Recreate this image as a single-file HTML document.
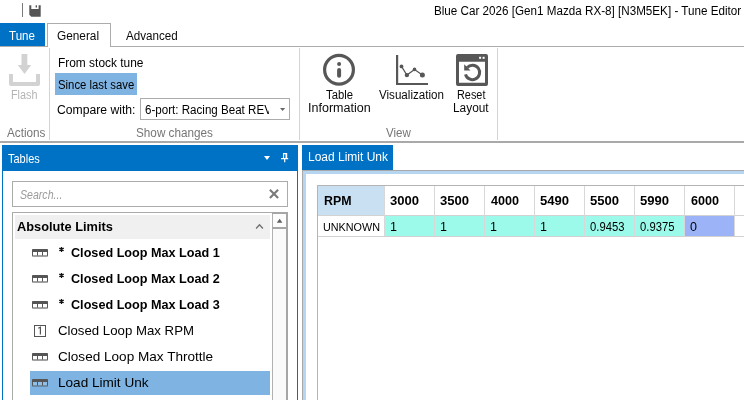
<!DOCTYPE html>
<html><head><meta charset="utf-8"><style>
html,body{margin:0;padding:0;width:744px;height:400px;overflow:hidden;background:#fff;position:relative}
body{font-family:"Liberation Sans",sans-serif}
.t{position:absolute;white-space:pre;line-height:20px;transform-origin:0 0}
.r{position:absolute}
svg{position:absolute}
</style></head><body>
<!-- title bar -->
<div class="r" style="left:22px;top:3px;width:1px;height:14px;background:#7a7a7a"></div>
<svg style="left:29px;top:5px" width="12" height="12" viewBox="0 0 12 12">
<path d="M0.3 0.3H2.3V4.1H9.6V0.3H11.7V11.7H2.3L0.3 9.7Z" fill="#555"/>
<rect x="6.6" y="0.3" width="1.4" height="2.2" fill="#555"/>
</svg>
<!-- tabs -->
<div class="r" style="left:0;top:46px;width:744px;height:1px;background:#acacac"></div>
<div class="r" style="left:0;top:23px;width:45px;height:23px;background:#0072c6"></div>
<div class="r" style="left:47px;top:23px;width:62px;height:23px;border:1px solid #acacac;border-bottom:none;background:#fff"></div>
<!-- ribbon dividers -->
<div class="r" style="left:49px;top:48px;width:1px;height:92px;background:#d4d4d4"></div>
<div class="r" style="left:299px;top:48px;width:1px;height:92px;background:#d4d4d4"></div>
<div class="r" style="left:497px;top:48px;width:1px;height:92px;background:#d4d4d4"></div>
<div class="r" style="left:0;top:141px;width:744px;height:2px;background:#a9a9a9"></div>
<!-- flash icon -->
<svg style="left:0;top:46px" width="50" height="50" viewBox="0 46 50 50">
<rect x="21.5" y="54" width="5.8" height="11.5" fill="#d2d2d2"/>
<path d="M17.8 65H31.2L24.5 74Z" fill="#d2d2d2"/>
<path d="M9 74H13V82H36V74H40V84A2 2 0 0 1 38 86H11A2 2 0 0 1 9 84Z" fill="#d2d2d2"/>
</svg>
<!-- since last save highlight -->
<div class="r" style="left:55px;top:73px;width:82px;height:22px;background:#7fb4e2"></div>
<!-- combobox -->
<div class="r" style="left:140px;top:98px;width:148px;height:20px;border:1px solid #acacac;background:#fff"></div>
<svg style="left:278px;top:105px" width="10" height="8" viewBox="0 0 10 8"><path d="M2 3H7.2L4.6 5.9Z" fill="#666"/></svg>
<!-- info icon -->
<svg style="left:320px;top:52px" width="40" height="40" viewBox="320 52 40 40">
<circle cx="339" cy="69.8" r="14.4" fill="none" stroke="#575757" stroke-width="3.2"/>
<circle cx="339.1" cy="63.9" r="2" fill="#575757"/>
<line x1="339.1" y1="70" x2="339.1" y2="75.8" stroke="#575757" stroke-width="4" stroke-linecap="round"/>
</svg>
<!-- visualization icon -->
<svg style="left:390px;top:50px" width="42" height="40" viewBox="390 50 42 40">
<rect x="396" y="55" width="2.2" height="30" fill="#575757"/>
<rect x="396" y="83" width="32" height="2" fill="#575757"/>
<polyline points="401.5,66.4 406.9,75.1 414.5,69.4 422.4,75" fill="none" stroke="#575757" stroke-width="1.2"/>
<circle cx="401.5" cy="66.4" r="1.9" fill="#575757"/>
<circle cx="406.9" cy="75.1" r="2.2" fill="#575757"/>
<circle cx="414.5" cy="69.4" r="1.8" fill="#575757"/>
<circle cx="422.4" cy="75" r="2.5" fill="#575757"/>
</svg>
<!-- reset layout icon -->
<svg style="left:450px;top:50px" width="42" height="40" viewBox="450 50 42 40">
<path fill-rule="evenodd" fill="#575757" d="M458 54H486A2 2 0 0 1 488 56V84A2 2 0 0 1 486 86H458A2 2 0 0 1 456 84V56A2 2 0 0 1 458 54ZM459 61.8V82.7H485V61.8Z"/>
<rect x="479.1" y="56.8" width="2" height="2" fill="#fff"/>
<rect x="482.6" y="56.8" width="2" height="2" fill="#fff"/>
<path d="M465.5 74.3A7.2 7.2 0 1 0 467.2 67.5" fill="none" stroke="#575757" stroke-width="3"/>
<path d="M464.2 64.2L464.2 70.5L470.5 70.5Z" fill="#575757"/>
</svg>
<!-- Tables panel -->
<div class="r" style="left:2px;top:145px;width:296px;height:26px;background:#0072c6"></div>
<div class="r" style="left:2px;top:171px;width:1px;height:229px;background:#0072c6"></div>
<div class="r" style="left:297px;top:171px;width:1px;height:229px;background:#0072c6"></div>
<svg style="left:258px;top:148px" width="36" height="20" viewBox="258 148 36 20">
<path d="M264 156H270L267 160Z" fill="#fff"/>
<path fill="#fff" d="M283 153H287.2V158H288.2V159.2H285.3V162.2H284.1V159.2H281V158H283ZM284.1 154.2V158H285.5V154.2Z"/>
</svg>
<!-- search box -->
<div class="r" style="left:12px;top:181px;width:274px;height:24px;border:1px solid #ababab;background:#fff"></div>
<svg style="left:262px;top:182px" width="24" height="24" viewBox="262 182 24 24">
<path d="M269.9 189.8L278.1 198M278.1 189.8L269.9 198" stroke="#7a7a7a" stroke-width="2.1"/>
</svg>
<!-- tree -->
<div class="r" style="left:12px;top:212px;width:276px;height:188px;border-left:1px solid #ababab;border-top:1px solid #ababab;box-sizing:border-box"></div>
<div class="r" style="left:15px;top:215px;width:255px;height:24px;background:#f0f0f0"></div>
<svg style="left:250px;top:220px" width="18" height="14" viewBox="250 220 18 14"><path d="M256.1 228.5L259.5 224.8L262.9 228.5" fill="none" stroke="#707070" stroke-width="1.35"/></svg>
<!-- scrollbar -->
<div class="r" style="left:272px;top:212px;width:16px;height:188px;background:#fafafa"></div>
<div class="r" style="left:272px;top:212px;width:1px;height:188px;background:#b0b0b0"></div>
<div class="r" style="left:286px;top:212px;width:2px;height:188px;background:#a6a6a6"></div>
<div class="r" style="left:272px;top:212px;width:16px;height:2px;background:#a6a6a6"></div>
<div class="r" style="left:273px;top:214px;width:13px;height:13px;background:#fdfdfd"></div>
<div class="r" style="left:272px;top:227px;width:16px;height:2px;background:#a6a6a6"></div>
<svg style="left:272px;top:214px" width="16" height="13" viewBox="272 214 16 13"><path d="M276.8 222.7H282.4L279.6 218.8Z" fill="#606060"/></svg>
<!-- selection -->
<div class="r" style="left:30px;top:371px;width:240px;height:24px;background:#7fb4e2"></div>
<!-- tree icons -->
<svg style="left:30px;top:240px" width="20" height="160" viewBox="30 240 20 160">
<g transform="translate(0 249)"><rect x="32" y="0" width="16" height="7.5" rx="0.8" fill="#555"/><rect x="33" y="3" width="4" height="3.5" fill="#fff"/><rect x="38" y="3" width="4" height="3.5" fill="#fff"/><rect x="43" y="3" width="4" height="3.5" fill="#fff"/><rect x="32.6" y="6.5" width="14.8" height="1" fill="#9a9a9a"/></g>
<g transform="translate(0 275)"><rect x="32" y="0" width="16" height="7.5" rx="0.8" fill="#555"/><rect x="33" y="3" width="4" height="3.5" fill="#fff"/><rect x="38" y="3" width="4" height="3.5" fill="#fff"/><rect x="43" y="3" width="4" height="3.5" fill="#fff"/><rect x="32.6" y="6.5" width="14.8" height="1" fill="#9a9a9a"/></g>
<g transform="translate(0 301)"><rect x="32" y="0" width="16" height="7.5" rx="0.8" fill="#555"/><rect x="33" y="3" width="4" height="3.5" fill="#fff"/><rect x="38" y="3" width="4" height="3.5" fill="#fff"/><rect x="43" y="3" width="4" height="3.5" fill="#fff"/><rect x="32.6" y="6.5" width="14.8" height="1" fill="#9a9a9a"/></g>
<rect x="34.5" y="325.5" width="11" height="11" fill="none" stroke="#555" stroke-width="1"/>
<path d="M38.3 328.3L40.4 327.2V334.6" fill="none" stroke="#555" stroke-width="1.2"/>
<g transform="translate(0 353)"><rect x="32" y="0" width="16" height="7.5" rx="0.8" fill="#555"/><rect x="33" y="3" width="4" height="3.5" fill="#fff"/><rect x="38" y="3" width="4" height="3.5" fill="#fff"/><rect x="43" y="3" width="4" height="3.5" fill="#fff"/><rect x="32.6" y="6.5" width="14.8" height="1" fill="#9a9a9a"/></g>
<g transform="translate(0 379)"><rect x="32" y="0" width="16" height="7.5" rx="0.8" fill="#555"/><rect x="33" y="3" width="4" height="3.5" fill="#8dbfe8"/><rect x="38" y="3" width="4" height="3.5" fill="#8dbfe8"/><rect x="43" y="3" width="4" height="3.5" fill="#8dbfe8"/><rect x="32.6" y="6.5" width="14.8" height="1" fill="#6f8fab"/></g>
</svg>
<!-- document tab -->
<div class="r" style="left:302px;top:145px;width:91px;height:25px;background:#0072c6"></div>
<div class="r" style="left:302px;top:170px;width:442px;height:1px;background:#a9a9a9"></div>
<div class="r" style="left:302px;top:170px;width:1px;height:230px;background:#a9a9a9"></div>
<div class="r" style="left:303px;top:171px;width:441px;height:3px;background:#b6d5f0"></div>
<div class="r" style="left:303px;top:171px;width:3px;height:229px;background:#b6d5f0"></div>
<!-- table -->
<div class="r" style="left:317px;top:185px;width:427px;height:1px;background:#b4b4b4"></div>
<div class="r" style="left:317px;top:185px;width:1px;height:215px;background:#b4b4b4"></div>
<div class="r" style="left:318px;top:186px;width:66px;height:29px;background:#c9dff2"></div>
<div class="r" style="left:385px;top:216px;width:349px;height:20px;background:#9cfaea"></div>
<div class="r" style="left:685px;top:216px;width:49px;height:20px;background:#9db3f8"></div>
<div class="r" style="left:318px;top:215px;width:426px;height:1px;background:#d2d2d2"></div>
<div class="r" style="left:318px;top:236px;width:426px;height:1px;background:#d2d2d2"></div>
<div class="r" style="left:384px;top:186px;width:1px;height:50px;background:#d8d8d8"></div>
<div class="r" style="left:434px;top:186px;width:1px;height:50px;background:#d8d8d8"></div>
<div class="r" style="left:484px;top:186px;width:1px;height:50px;background:#d8d8d8"></div>
<div class="r" style="left:534px;top:186px;width:1px;height:50px;background:#d8d8d8"></div>
<div class="r" style="left:584px;top:186px;width:1px;height:50px;background:#d8d8d8"></div>
<div class="r" style="left:634px;top:186px;width:1px;height:50px;background:#d8d8d8"></div>
<div class="r" style="left:684px;top:186px;width:1px;height:50px;background:#d8d8d8"></div>
<div class="r" style="left:734px;top:186px;width:1px;height:50px;background:#d8d8d8"></div>
<!-- asterisks -->
<svg style="left:56px;top:244px" width="10" height="70" viewBox="56 244 10 70">
<path transform="translate(61.5 249.4)" d="M0 -2.5V2.5M-2.2 -1.25L2.2 1.25M-2.2 1.25L2.2 -1.25" stroke="#111" stroke-width="1.3"/>
<path transform="translate(61.5 275.4)" d="M0 -2.5V2.5M-2.2 -1.25L2.2 1.25M-2.2 1.25L2.2 -1.25" stroke="#111" stroke-width="1.3"/>
<path transform="translate(61.5 301.4)" d="M0 -2.5V2.5M-2.2 -1.25L2.2 1.25M-2.2 1.25L2.2 -1.25" stroke="#111" stroke-width="1.3"/>
</svg>

<div style="position:absolute;left:0;top:0;width:744px;height:400px;will-change:transform">
<span class="t" style="left:434.03px;top:0.50px;font-size:12px;color:#000;transform:scaleX(0.9714)">Blue Car 2026 [Gen1 Mazda RX-8] [N3M5EK] - Tune Editor</span>
<span class="t" style="left:9.00px;top:25.80px;font-size:12px;color:#fff;transform:scaleX(0.9630)">Tune</span>
<span class="t" style="left:57.11px;top:25.60px;font-size:12px;color:#0a0a0a;transform:scaleX(0.9854)">General</span>
<span class="t" style="left:125.70px;top:25.60px;font-size:12px;color:#0a0a0a;transform:scaleX(0.9698)">Advanced</span>
<span class="t" style="left:11.40px;top:84.80px;font-size:12px;color:#b4b4b4;transform:scaleX(0.9000)">Flash</span>
<span class="t" style="left:6.50px;top:122.50px;font-size:12px;color:#767676;transform:scaleX(0.9769)">Actions</span>
<span class="t" style="left:57.71px;top:52.80px;font-size:12px;color:#000;transform:scaleX(0.9929)">From stock tune</span>
<span class="t" style="left:57.76px;top:74.60px;font-size:12px;color:#000;transform:scaleX(0.9443)">Since last save</span>
<span class="t" style="left:57.29px;top:99.50px;font-size:12px;color:#000;transform:scaleX(1.0147)">Compare with:</span>
<div style="position:absolute;left:140px;top:90px;width:129px;height:40px;overflow:hidden"><span class="t" style="left:5.03px;top:9.50px;font-size:12px;color:#000;transform:scaleX(0.9656)">6-port: Racing Beat REV</span></div>
<span class="t" style="left:136.02px;top:122.50px;font-size:12px;color:#767676;transform:scaleX(0.9779)">Show changes</span>
<span class="t" style="left:326.00px;top:84.70px;font-size:12px;color:#0a0a0a;transform:scaleX(0.9393)">Table</span>
<span class="t" style="left:307.76px;top:97.60px;font-size:12px;color:#0a0a0a;transform:scaleX(1.0448)">Information</span>
<span class="t" style="left:379.40px;top:84.70px;font-size:12px;color:#0a0a0a;transform:scaleX(0.9672)">Visualization</span>
<span class="t" style="left:457.19px;top:84.50px;font-size:12px;color:#0a0a0a;transform:scaleX(0.9067)">Reset</span>
<span class="t" style="left:453.41px;top:97.60px;font-size:12px;color:#0a0a0a;transform:scaleX(0.9886)">Layout</span>
<span class="t" style="left:386.10px;top:122.80px;font-size:12px;color:#767676;transform:scaleX(0.9615)">View</span>
<span class="t" style="left:7.50px;top:148.80px;font-size:13px;color:#fff;transform:scaleX(0.8459)">Tables</span>
<span class="t" style="left:307.74px;top:146.80px;font-size:12.5px;color:#fff;transform:scaleX(0.9598)">Load Limit Unk</span>
<span class="t" style="left:20.12px;top:185.00px;font-size:12px;color:#9a9a9a;font-style:italic;transform:scaleX(0.8826)">Search...</span>
<span class="t" style="left:17.10px;top:216.90px;font-size:13px;color:#000;font-weight:bold;transform:scaleX(0.9835)">Absolute Limits</span>
<span class="t" style="left:70.90px;top:243.10px;font-size:13px;color:#000;font-weight:bold;transform:scaleX(0.9719)">Closed Loop Max Load 1</span>
<span class="t" style="left:70.90px;top:269.20px;font-size:13px;color:#000;font-weight:bold;transform:scaleX(0.9719)">Closed Loop Max Load 2</span>
<span class="t" style="left:70.90px;top:295.30px;font-size:13px;color:#000;font-weight:bold;transform:scaleX(0.9719)">Closed Loop Max Load 3</span>
<span class="t" style="left:57.72px;top:321.20px;font-size:13.5px;color:#000;transform:scaleX(0.9796)">Closed Loop Max RPM</span>
<span class="t" style="left:57.69px;top:347.10px;font-size:13.5px;color:#000;transform:scaleX(1.0052)">Closed Loop Max Throttle</span>
<span class="t" style="left:57.69px;top:372.80px;font-size:13.5px;color:#000;transform:scaleX(1.0056)">Load Limit Unk</span>
<span class="t" style="left:323.81px;top:190.90px;font-size:12.5px;color:#000;font-weight:bold;transform:scaleX(0.9885)">RPM</span>
<span class="t" style="left:322.66px;top:216.80px;font-size:11.5px;color:#000;transform:scaleX(0.9390)">UNKNOWN</span>
<span class="t" style="left:390.05px;top:190.90px;font-size:12.5px;color:#000;font-weight:bold;transform:scaleX(1.0462)">3000</span>
<span class="t" style="left:440.05px;top:190.90px;font-size:12.5px;color:#000;font-weight:bold;transform:scaleX(1.0462)">3500</span>
<span class="t" style="left:491.10px;top:190.90px;font-size:12.5px;color:#000;font-weight:bold;transform:scaleX(1.0074)">4000</span>
<span class="t" style="left:540.05px;top:190.90px;font-size:12.5px;color:#000;font-weight:bold;transform:scaleX(1.0462)">5490</span>
<span class="t" style="left:590.05px;top:190.90px;font-size:12.5px;color:#000;font-weight:bold;transform:scaleX(1.0462)">5500</span>
<span class="t" style="left:640.05px;top:190.90px;font-size:12.5px;color:#000;font-weight:bold;transform:scaleX(1.0462)">5990</span>
<span class="t" style="left:691.10px;top:190.90px;font-size:12.5px;color:#000;font-weight:bold;transform:scaleX(1.0074)">6000</span>
<span class="t" style="left:390.00px;top:216.80px;font-size:12.5px;color:#000">1</span>
<span class="t" style="left:440.00px;top:216.80px;font-size:12.5px;color:#000">1</span>
<span class="t" style="left:490.00px;top:216.80px;font-size:12.5px;color:#000">1</span>
<span class="t" style="left:540.00px;top:216.80px;font-size:12.5px;color:#000">1</span>
<span class="t" style="left:590.00px;top:216.80px;font-size:12.5px;color:#000;transform:scaleX(0.9000)">0.9453</span>
<span class="t" style="left:640.00px;top:216.80px;font-size:12.5px;color:#000;transform:scaleX(0.9000)">0.9375</span>
<span class="t" style="left:690.00px;top:216.80px;font-size:12.5px;color:#000">0</span>
</div>
</body></html>
